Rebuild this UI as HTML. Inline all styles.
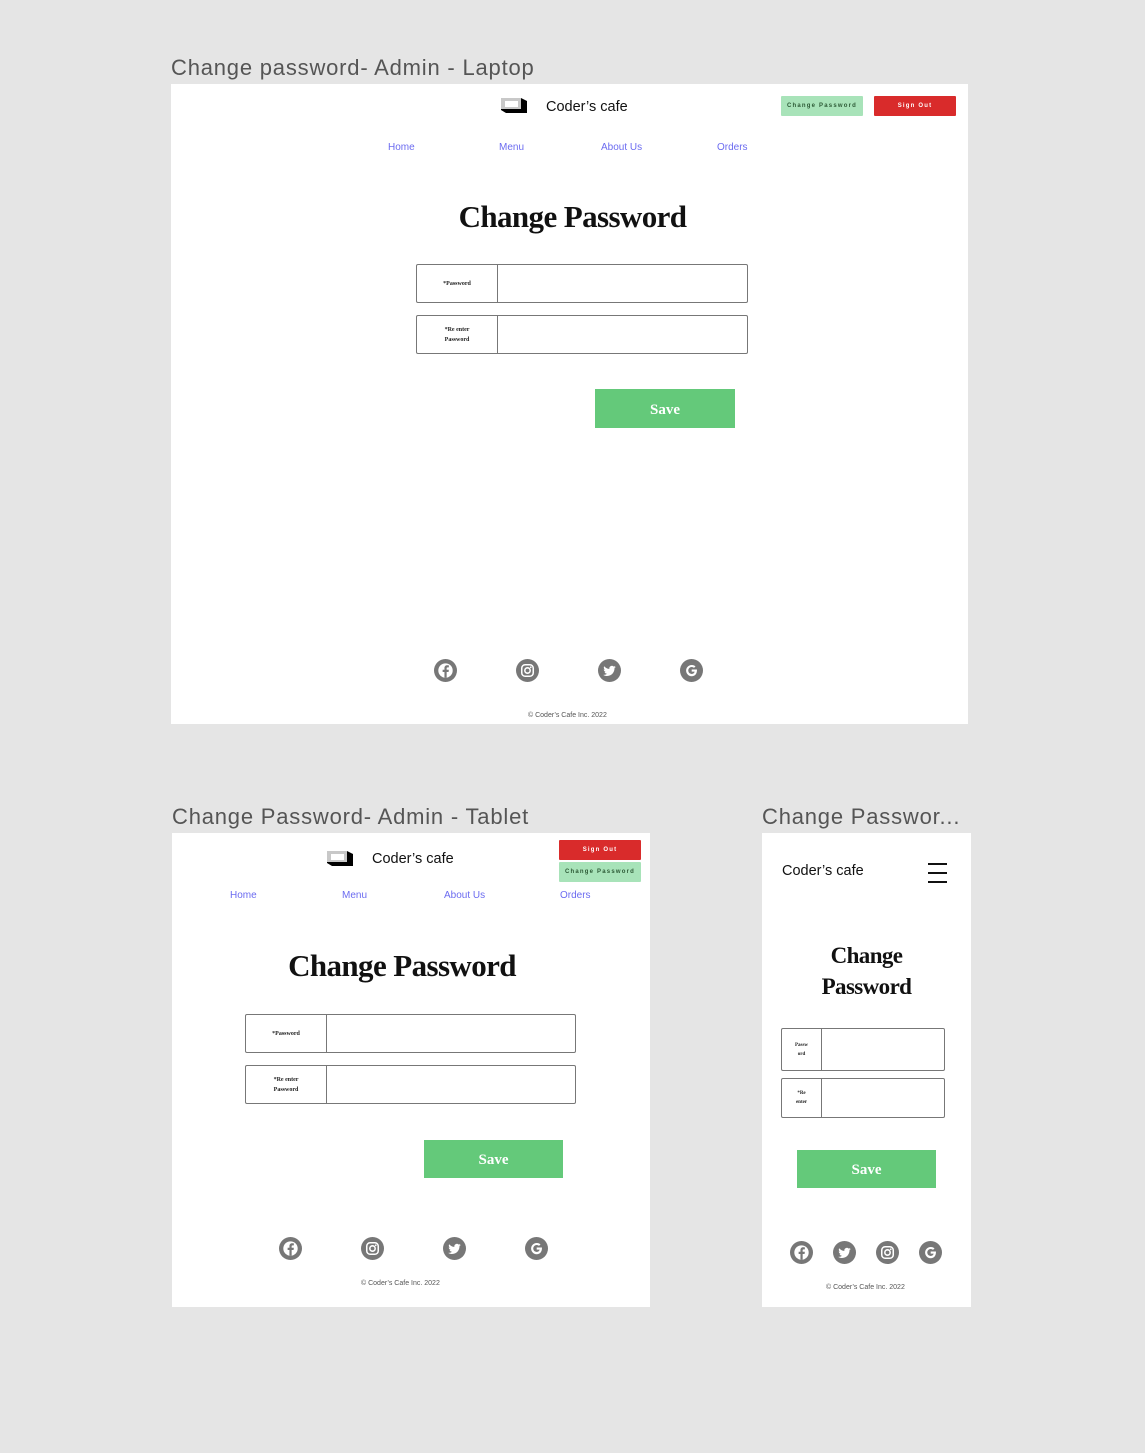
<!DOCTYPE html>
<html><head><meta charset="utf-8">
<style>
*{margin:0;padding:0;box-sizing:border-box}
body{width:1145px;height:1453px;background:#e5e5e5;position:relative;overflow:hidden;font-family:"Liberation Sans",sans-serif}
.a{position:absolute}
.ttl{position:absolute;font-size:22px;color:#555;white-space:nowrap;letter-spacing:0.8px}
.frame{position:absolute;background:#fff}
.brand{position:absolute;font-size:14.5px;color:#111;white-space:nowrap}
.nav{position:absolute;font-size:10px;color:#6b6bf0;white-space:nowrap}
.h{position:absolute;font-family:"Liberation Serif",serif;font-weight:bold;color:#111;text-align:center;letter-spacing:-0.6px;white-space:nowrap}
.fld{position:absolute;border:1px solid #777;border-radius:2px;background:#fff}
.fld .lab{position:absolute;left:0;top:0;bottom:0;border-right:1.5px solid #777;display:flex;align-items:center;justify-content:center;text-align:center;font-family:"Liberation Serif",serif;font-weight:bold;font-size:6px;line-height:10px;color:#222}
.save{position:absolute;background:#64c97a;color:#fff;font-family:"Liberation Serif",serif;font-weight:bold;font-size:15px;display:flex;align-items:center;justify-content:center;padding-top:3px}
.btn{position:absolute;font-size:6px;font-weight:bold;letter-spacing:1.2px;display:flex;align-items:center;justify-content:center;border-radius:1px;white-space:nowrap}
.red{background:#d92b2b;color:#fff}
.grn{background:#a8e3b9;color:#2d5a36}
.ic{position:absolute;width:23px;height:23px;border-radius:50%;background:#777;display:flex;align-items:center;justify-content:center}
.copy{position:absolute;font-size:7px;color:#555;white-space:nowrap}
</style></head><body>

<svg width="0" height="0" style="position:absolute">
<defs>
<symbol id="fb" viewBox="0 0 24 24"><circle cx="12" cy="12" r="7.5" fill="#fff"/><path d="M13.2 19.5v-6h2l.3-2.3h-2.3V9.8c0-.7.2-1.1 1.1-1.1h1.2V6.6c-.2 0-.9-.1-1.7-.1-1.700 0-2.9 1-2.9 2.9v1.8H9v2.3h1.9v6z" fill="#777"/></symbol>
<symbol id="ig" viewBox="0 0 24 24"><rect x="6" y="6" width="12" height="12" rx="3.5" fill="none" stroke="#fff" stroke-width="1.6"/><circle cx="12" cy="12" r="2.8" fill="none" stroke="#fff" stroke-width="1.6"/><circle cx="15.4" cy="8.6" r=".9" fill="#fff"/></symbol>
<symbol id="tw" viewBox="0 0 24 24"><path d="M18.5 8.3c-.5.2-1 .4-1.5.4.6-.3 1-.9 1.2-1.5-.5.3-1.1.5-1.7.7a2.7 2.7 0 0 0-4.6 2.4c-2.2-.1-4.2-1.2-5.5-2.8-.7 1.2-.3 2.8.8 3.6-.4 0-.8-.1-1.2-.3 0 1.3.9 2.4 2.1 2.7-.4.1-.8.1-1.2 0 .3 1.1 1.3 1.8 2.5 1.9-1.1.9-2.6 1.3-4 1.100 1.2.8 2.6 1.2 4.1 1.2 5 0 7.8-4.2 7.7-8 .5-.4 1-.9 1.3-1.4z" fill="#fff"/></symbol>
<symbol id="gg" viewBox="0 0 24 24"><path d="M17.6 11h-5.4v2.2h3.1c-.3 1.5-1.6 2.4-3.1 2.4a3.6 3.6 0 1 1 2.4-6.3l1.6-1.6A5.9 5.9 0 1 0 12.2 18c3.4 0 5.7-2.4 5.5-7z" fill="#fff"/></symbol>
<symbol id="logo" viewBox="0 0 26 15"><path d="M0 0h20l6 3v12H5L0 12z" fill="#000"/><path d="M0 0h20v11H0z" fill="#c8c8c8"/><path d="M4 3h13v6H4z" fill="#fff"/></symbol>
</defs></svg>

<!-- Laptop -->
<div class="ttl" style="left:171px;top:55px">Change password- Admin - Laptop</div>
<div class="frame" style="left:171px;top:84px;width:797px;height:640px">
  <svg class="a" style="left:330px;top:14px" width="26" height="15"><use href="#logo"/></svg>
  <div class="brand" style="left:375px;top:15px">Coder’s cafe</div>
  <div class="btn grn" style="left:610px;top:12px;width:82px;height:20px">Change Password</div>
  <div class="btn red" style="left:703px;top:12px;width:82px;height:20px">Sign Out</div>
  <div class="nav" style="left:217px;top:58px">Home</div>
  <div class="nav" style="left:328px;top:58px">Menu</div>
  <div class="nav" style="left:430px;top:58px">About Us</div>
  <div class="nav" style="left:546px;top:58px">Orders</div>
  <div class="h" style="left:0;width:803px;top:115px;font-size:31px">Change Password</div>
  <div class="fld" style="left:245px;top:180px;width:332px;height:39px"><div class="lab" style="width:81px">*Password</div></div>
  <div class="fld" style="left:245px;top:231px;width:332px;height:39px"><div class="lab" style="width:81px">*Re enter<br>Password</div></div>
  <div class="save" style="left:424px;top:305px;width:140px;height:39px">Save</div>
  <div class="ic" style="left:263px;top:575px"><svg width="23" height="23"><use href="#fb"/></svg></div>
  <div class="ic" style="left:345px;top:575px"><svg width="23" height="23"><use href="#ig"/></svg></div>
  <div class="ic" style="left:427px;top:575px"><svg width="23" height="23"><use href="#tw"/></svg></div>
  <div class="ic" style="left:509px;top:575px"><svg width="23" height="23"><use href="#gg"/></svg></div>
  <div class="copy" style="left:357px;top:628px">© Coder’s Cafe Inc. 2022</div>
</div>

<!-- Tablet -->
<div class="ttl" style="left:172px;top:804px">Change Password- Admin - Tablet</div>
<div class="frame" style="left:172px;top:833px;width:478px;height:474px">
  <svg class="a" style="left:155px;top:18px" width="26" height="15"><use href="#logo"/></svg>
  <div class="brand" style="left:200px;top:18px">Coder’s cafe</div>
  <div class="btn red" style="left:387px;top:7px;width:82px;height:20px">Sign Out</div>
  <div class="btn grn" style="left:387px;top:29px;width:82px;height:20px">Change Password</div>
  <div class="nav" style="left:58px;top:57px">Home</div>
  <div class="nav" style="left:170px;top:57px">Menu</div>
  <div class="nav" style="left:272px;top:57px">About Us</div>
  <div class="nav" style="left:388px;top:57px">Orders</div>
  <div class="h" style="left:0;width:460px;top:115px;font-size:31px">Change Password</div>
  <div class="fld" style="left:73px;top:181px;width:331px;height:39px"><div class="lab" style="width:81px">*Password</div></div>
  <div class="fld" style="left:73px;top:232px;width:331px;height:39px"><div class="lab" style="width:81px">*Re enter<br>Password</div></div>
  <div class="save" style="left:252px;top:307px;width:139px;height:38px">Save</div>
  <div class="ic" style="left:107px;top:404px"><svg width="23" height="23"><use href="#fb"/></svg></div>
  <div class="ic" style="left:189px;top:404px"><svg width="23" height="23"><use href="#ig"/></svg></div>
  <div class="ic" style="left:271px;top:404px"><svg width="23" height="23"><use href="#tw"/></svg></div>
  <div class="ic" style="left:353px;top:404px"><svg width="23" height="23"><use href="#gg"/></svg></div>
  <div class="copy" style="left:189px;top:447px">© Coder’s Cafe Inc. 2022</div>
</div>

<!-- Mobile -->
<div class="ttl" style="left:762px;top:804px">Change Passwor...</div>
<div class="frame" style="left:762px;top:833px;width:209px;height:474px">
  <div class="brand" style="left:20px;top:30px">Coder’s cafe</div>
  <div class="a" style="left:166px;top:30px;width:19px;height:2px;background:#111"></div>
  <div class="a" style="left:166px;top:39px;width:19px;height:2px;background:#111"></div>
  <div class="a" style="left:166px;top:48px;width:19px;height:2px;background:#111"></div>
  <div class="h" style="left:0;width:209px;top:107px;font-size:23px;line-height:31px">Change<br>Password</div>
  <div class="fld" style="left:19px;top:195px;width:164px;height:43px"><div class="lab" style="width:40px;font-size:5px;line-height:9px">Passw<br>ord</div></div>
  <div class="fld" style="left:19px;top:245px;width:164px;height:40px"><div class="lab" style="width:40px;font-size:5px;line-height:9px">*Re<br>enter</div></div>
  <div class="save" style="left:35px;top:317px;width:139px;height:38px">Save</div>
  <div class="ic" style="left:28px;top:408px"><svg width="23" height="23"><use href="#fb"/></svg></div>
  <div class="ic" style="left:71px;top:408px"><svg width="23" height="23"><use href="#tw"/></svg></div>
  <div class="ic" style="left:114px;top:408px"><svg width="23" height="23"><use href="#ig"/></svg></div>
  <div class="ic" style="left:157px;top:408px"><svg width="23" height="23"><use href="#gg"/></svg></div>
  <div class="copy" style="left:64px;top:451px">© Coder’s Cafe Inc. 2022</div>
</div>

</body></html>
